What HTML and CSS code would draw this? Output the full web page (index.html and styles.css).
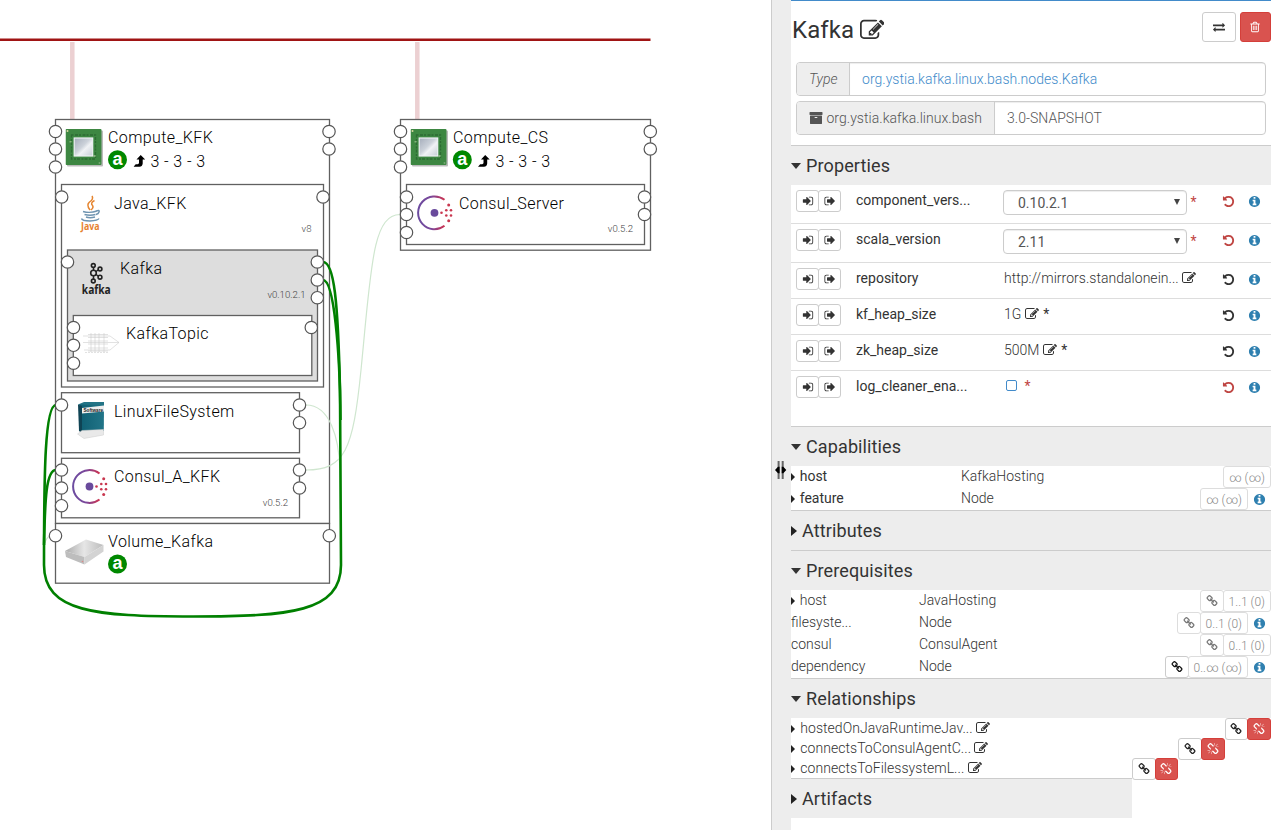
FILE: index.html
```html
<!DOCTYPE html>
<html lang="en">
<head>
<meta charset="utf-8">
<title>Topology editor</title>
<link rel="stylesheet" href="styles.css">
</head>
<body>
<svg class="sprite" width="0" height="0">
  <symbol id="edit" viewBox="0 0 1792 1792"><path d="M888 1184l116-116-152-152-116 116v56h96v96h56zm440-720q-16-16-33 1l-350 350q-17 17-1 33t33-1l350-350q17-17 1-33zm80 594v190q0 119-84.5 203.5t-203.5 84.5h-832q-119 0-203.5-84.5t-84.5-203.5v-832q0-119 84.5-203.5t203.5-84.5h832q63 0 117 25 15 7 18 23 3 17-9 29l-49 49q-14 14-32 8-23-6-45-6h-832q-66 0-113 47t-47 113v832q0 66 47 113t113 47h832q66 0 113-47t47-113v-126q0-13 9-22l64-64q15-15 35-7t20 29zm-96-738l288 288-672 672h-288v-288zm444 132l-92 92-288-288 92-92q28-28 68-28t68 28l152 152q28 28 28 68t-28 68z"/></symbol>
  <symbol id="undo" viewBox="0 0 1792 1792"><path d="M1664 896q0 156-61 298t-164 245-245 164-298 61q-172 0-327-72.5t-264-204.5q-7-10-6.5-22.5t8.5-20.5l137-138q10-9 25-9 16 2 23 12 73 95 179 147t225 52q104 0 198.5-40.5t163.5-109.5 109.5-163.5 40.5-198.5-40.5-198.5-109.5-163.5-163.5-109.5-198.5-40.5q-98 0-188 35.5t-160 101.5l137 138q31 30 14 69-17 40-59 40h-448q-26 0-45-19t-19-45v-448q0-42 40-59 39-17 69 14l130 129q107-101 244.5-156.5t284.5-55.5q156 0 298 61t245 164 164 245 61 298z"/></symbol>
  <symbol id="info" viewBox="0 0 1792 1792"><path d="M1152 1376v-160q0-14-9-23t-23-9h-96v-512q0-14-9-23t-23-9h-320q-14 0-23 9t-9 23v160q0 14 9 23t23 9h96v320h-96q-14 0-23 9t-9 23v160q0 14 9 23t23 9h448q14 0 23-9t9-23zm-128-896v-160q0-14-9-23t-23-9h-192q-14 0-23 9t-9 23v160q0 14 9 23t23 9h192q14 0 23-9t9-23zm640 416q0 209-103 385.5t-279.5 279.5-385.5 103-385.5-103-279.5-279.5-103-385.5 103-385.5 279.5-279.5 385.5-103 385.5 103 279.5 279.5 103 385.5z"/></symbol>
  <symbol id="in" viewBox="0 0 1792 1792"><path d="M1312 896q0 26-19 45l-544 544q-19 19-45 19t-45-19-19-45v-288h-448q-26 0-45-19t-19-45v-384q0-26 19-45t45-19h448v-288q0-26 19-45t45-19 45 19l544 544q19 19 19 45zm352-352v704q0 119-84.5 203.5t-203.5 84.5h-320q-13 0-22.5-9.5t-9.5-22.5q0-4-1-20t-.5-26.5 3-23.5 10-19.5 20.5-6.5h320q66 0 113-47t47-113v-704q0-66-47-113t-113-47h-312l-11.5-1-11.5-3-8-5.5-7-9-2-13.5q0-4-1-20t-.5-26.5 3-23.5 10-19.5 20.5-6.5h320q119 0 203.5 84.5t84.5 203.5z"/></symbol>
  <symbol id="out" viewBox="0 0 1792 1792"><path d="M704 1440q0 4 1 20t.5 26.5-3 23.5-10 19.5-20.5 6.5h-320q-119 0-203.5-84.5t-84.5-203.5v-704q0-119 84.5-203.5t203.5-84.5h320q13 0 22.5 9.5t9.5 22.5q0 4 1 20t.5 26.5-3 23.5-10 19.5-20.5 6.5h-320q-66 0-113 47t-47 113v704q0 66 47 113t113 47h312l11.5 1 11.5 3 8 5.5 7 9 2 13.5zm928-544q0 26-19 45l-544 544q-19 19-45 19t-45-19-19-45v-288h-448q-26 0-45-19t-19-45v-384q0-26 19-45t45-19h448v-288q0-26 19-45t45-19 45 19l544 544q19 19 19 45z"/></symbol>
  <symbol id="link" viewBox="0 0 1792 1792"><path d="M1520 1216q0-40-28-68l-208-208q-28-28-68-28-42 0-72 32 3 3 19 18.5t21.5 21.5 15 19 13 25.5 3.5 27.5q0 40-28 68t-68 28q-15 0-27.5-3.5t-25.5-13-19-15-21.5-21.5-18.5-19q-33 31-33 73 0 40 28 68l206 207q27 27 68 27 40 0 68-26l147-146q28-28 28-67zm-703-705q0-40-28-68l-206-207q-28-28-68-28-39 0-68 27l-147 146q-28 28-28 67 0 40 28 68l208 208q27 27 68 27 42 0 72-31-3-3-19-18.5t-21.5-21.5-15-19-13-25.5-3.5-27.5q0-40 28-68t68-28q15 0 27.5 3.5t25.5 13 19 15 21.5 21.5 18.5 19q33-31 33-73zm895 705q0 120-85 203l-147 146q-83 83-203 83-121 0-204-85l-206-207q-83-83-83-203 0-123 88-209l-88-88q-86 88-208 88-120 0-204-84l-208-208q-84-84-84-204t85-203l147-146q83-83 203-83 121 0 204 85l206 207q83 83 83 203 0 123-88 209l88 88q86-88 208-88 120 0 204 84l208 208q84 84 84 204z"/></symbol>
  <symbol id="unlink" viewBox="0 0 1792 1792"><path d="M503 1271l-256 256q-10 9-23 9-12 0-23-9-9-10-9-23t9-23l256-256q10-9 23-9t23 9q9 10 9 23t-9 23zm169 41v320q0 14-9 23t-23 9-23-9-9-23v-320q0-14 9-23t23-9 23 9 9 23zm-224-224q0 14-9 23t-23 9h-320q-14 0-23-9t-9-23 9-23 23-9h320q14 0 23 9t9 23zm1264 128q0 120-85 203l-147 146q-83 83-203 83-121 0-204-85l-334-335q-21-21-42-56l239-18 273 274q28 28 68 27.5t68-27.5l147-146q28-28 28-67 0-40-28-68l-274-275 18-239q35 21 56 42l336 336q84 86 84 204zm-617-724l-239 18-273-274q-28-28-68-28-39 0-68 27l-147 146q-28 28-28 67 0 40 28 68l274 274-18 240q-35-21-56-42l-336-336q-84-86-84-204 0-120 85-203l147-146q83-83 203-83 121 0 204 85l334 335q21 21 42 56zm633 84q0 14-9 23t-23 9h-320q-14 0-23-9t-9-23 9-23 23-9h320q14 0 23 9t9 23zm-544-544v320q0 14-9 23t-23 9-23-9-9-23v-320q0-14 9-23t23-9 23 9 9 23zm407 151l-256 256q-11 9-23 9t-23-9q-9-10-9-23t9-23l256-256q10-9 23-9t23 9q9 10 9 23t-9 23z"/></symbol>
  <symbol id="trash" viewBox="0 0 1792 1792"><path d="M704 736v576q0 14-9 23t-23 9h-64q-14 0-23-9t-9-23v-576q0-14 9-23t23-9h64q14 0 23 9t9 23zm256 0v576q0 14-9 23t-23 9h-64q-14 0-23-9t-9-23v-576q0-14 9-23t23-9h64q14 0 23 9t9 23zm256 0v576q0 14-9 23t-23 9h-64q-14 0-23-9t-9-23v-576q0-14 9-23t23-9h64q14 0 23 9t9 23zm128 724v-948h-896v948q0 22 7 40.5t14.5 27 10.5 8.5h832q3 0 10.5-8.5t14.5-27 7-40.5zm-672-1076h448l-48-117q-7-9-17-11h-317q-10 2-17 11zm928 32v64q0 14-9 23t-23 9h-96v948q0 83-47 143.5t-113 60.5h-832q-66 0-113-58.5t-47-141.5v-952h-96q-14 0-23-9t-9-23v-64q0-14 9-23t23-9h309l70-167q15-37 54-63t79-26h320q40 0 79 26t54 63l70 167h309q14 0 23 9t9 23z"/></symbol>
  <symbol id="exchange" viewBox="0 0 1792 1792"><path d="M1792 1184v192q0 13-9.500 22.500t-22.500 9.500h-1376v192q0 13-9.500 22.500t-22.500 9.500q-12 0-24-10l-319-320q-9-9-9-22 0-14 9-23l320-320q9-9 23-9 13 0 22.500 9.500t9.500 22.500v192h1376q13 0 22.500 9.500t9.500 22.500zm0-544q0 14-9 23l-320 320q-9 9-23 9-13 0-22.500-9.500t-9.500-22.500v-192h-1376q-13 0-22.500-9.500t-9.500-22.500v-192q0-13 9.500-22.500t22.500-9.500h1376v-192q0-14 9-23t23-9q12 0 24 10l319 319q9 9 9 23z"/></symbol>
  <symbol id="archive" viewBox="0 0 1792 1792"><path d="M1088 832q0-26-19-45t-45-19h-256q-26 0-45 19t-19 45 19 45 45 19h256q26 0 45-19t19-45zm576-192v960q0 26-19 45t-45 19h-1408q-26 0-45-19t-19-45v-960q0-26 19-45t45-19h1408q26 0 45 19t19 45zm64-448v256q0 26-19 45t-45 19h-1536q-26 0-45-19t-19-45v-256q0-26 19-45t45-19h1536q26 0 45 19t19 45z"/></symbol>
  <symbol id="resize" viewBox="0 0 12 20"><path fill="#666" d="M2.600 1h2v18h-2zM6.700 1h2v18h-2z"/><path fill="#000" d="M0 10L3 6.800h1.600v6.400H3ZM11.300 10L8.300 6.800H6.700v6.400H8.300Z"/></symbol>
  <symbol id="chip" viewBox="0 0 38 38"><rect x="1.500" y="1.500" width="36" height="36" rx="1" fill="#bbb"/><rect x="0" y="0" width="36" height="36" rx="1" fill="#3d8742"/><rect x="6" y="6" width="24" height="24" fill="none" stroke="#2d6c33" stroke-width="1.300" stroke-dasharray="2 1.500 3 1"/><rect x="4" y="12" width="2" height="1.500" fill="#86b07e"/><rect x="28" y="26" width="2" height="2" fill="#86b07e"/><circle cx="2" cy="2" r="1" fill="#d8d8a0"/><circle cx="34" cy="34" r="1" fill="#74a670"/><rect x="8.700" y="9" width="18.500" height="18" fill="url(#metal)" stroke="#eef1f4" stroke-width="1.200"/></symbol>
  <symbol id="consul" viewBox="0 0 36 36"><path d="M27.500 5A16.400 16.400 0 1 0 27.500 31" fill="none" stroke="url(#consulGrad)" stroke-width="2"/><circle cx="17.500" cy="18" r="3.900"/><g fill="#c9374f"><circle cx="24.500" cy="18" r="1.300"/><circle cx="29.300" cy="15.500" r="1.300"/><circle cx="29.300" cy="20.700" r="1.300"/><circle cx="34" cy="15.500" r="1.300"/><circle cx="34" cy="20.700" r="1.300"/><circle cx="31.700" cy="10.200" r="1.500"/><circle cx="31.700" cy="26" r="1.500"/></g></symbol>
  <symbol id="scale" viewBox="0 0 12 12"><path d="M7.200 0L11.700 4.500H9.200V8.500Q8.700 11.700 6 11.700H0L2.200 9.300H4.200Q5.300 9 5.500 8V4.500H3Z"/></symbol>
  <linearGradient id="metal" x1="0" y1="0" x2="1" y2="1"><stop offset="0" stop-color="#a4acba"/><stop offset=".45" stop-color="#ccd2da"/><stop offset=".6" stop-color="#f0f2f5"/><stop offset="1" stop-color="#c6cdd6"/></linearGradient>
  <linearGradient id="consulGrad"><stop offset="0" stop-color="#6c4ca0"/><stop offset=".5" stop-color="#7b479a"/><stop offset="1" stop-color="#cd3350"/></linearGradient>
  <linearGradient id="disk"><stop offset="0" stop-color="#aaa"/><stop offset=".5" stop-color="#e6e6e6"/><stop offset="1" stop-color="#bbb"/></linearGradient>
  <linearGradient id="box"><stop offset="0" stop-color="#0f5f73"/><stop offset="1" stop-color="#227588"/></linearGradient>
</svg>

<div class="editor">
  <svg class="topology" viewBox="0 0 771 830" width="771" height="830">
    <path class="network" d="M0 39.700H650.500"/>
    <path class="drop" d="M72.300 42V119M417.300 42V119"/>

    <g class="node">
      <rect x="55.500" y="119.500" width="274" height="404"/>
      <rect x="61.500" y="184.500" width="262" height="202.500"/>
      <rect class="selected" x="67.500" y="250" width="250" height="131"/>
      <rect x="73.300" y="315.500" width="238.500" height="60"/>
      <rect x="61.500" y="392.700" width="238" height="60"/>
      <rect x="61.500" y="458.300" width="238" height="59.500"/>
      <rect x="55.500" y="523.500" width="274" height="59.700"/>
      <rect x="400.500" y="119.500" width="250" height="130.700"/>
      <rect x="406.500" y="184.500" width="238" height="60"/>
    </g>

    <path class="relation-thin" d="M306 405C330 405 339 438 340 470M306 470C345 470 353 450 361 370C371 270 372 214.500 400 214.500M50 536Q46 538 45 543"/>
    <path class="relation" d="M323 262C334 262 338 300 340 390C340.500 440 341 500 341 565C341 612 290 616.500 193 616.500C95 616.500 44 612 44 565C44 470 45 405 56 405"/>
    <path class="relation" d="M323 280C334 280 340 350 340.500 420M56 470C46 470 45 500 44 545"/>

    <g class="port">
      <circle cx="55.500" cy="131.500" r="6.200"/><circle cx="55.500" cy="149" r="6.200"/><circle cx="55.500" cy="167" r="6.200"/>
      <circle cx="329" cy="131.500" r="6.200"/><circle cx="329" cy="149" r="6.200"/>
      <circle cx="61.700" cy="197" r="6.200"/><circle cx="323" cy="197" r="6.200"/>
      <circle cx="67.500" cy="262" r="6.200"/><circle cx="317.300" cy="262" r="6.200"/><circle cx="317.300" cy="280" r="6.200"/><circle cx="317.300" cy="297.700" r="6.200"/>
      <circle cx="73.500" cy="327.500" r="6.200"/><circle cx="73.500" cy="345.300" r="6.200"/><circle cx="73.500" cy="363.200" r="6.200"/><circle cx="311.300" cy="327.500" r="6.200"/>
      <circle cx="61.500" cy="405" r="6.200"/><circle cx="299.500" cy="405" r="6.200"/><circle cx="299.500" cy="422.700" r="6.200"/>
      <circle cx="61.500" cy="470" r="6.200"/><circle cx="61.500" cy="488" r="6.200"/><circle cx="61.500" cy="505.700" r="6.200"/>
      <circle cx="299.500" cy="470" r="6.200"/><circle cx="299.500" cy="488" r="6.200"/>
      <circle cx="55.500" cy="535.700" r="6.200"/><circle cx="329.300" cy="535.700" r="6.200"/>
      <circle cx="400.500" cy="131.500" r="6.200"/><circle cx="400.500" cy="149" r="6.200"/><circle cx="400.500" cy="167" r="6.200"/>
      <circle cx="650.300" cy="131.500" r="6.200"/><circle cx="650.300" cy="149" r="6.200"/>
      <circle cx="406.500" cy="197" r="6.200"/><circle cx="406.500" cy="214.500" r="6.200"/><circle cx="406.500" cy="232.500" r="6.200"/>
      <circle cx="644.500" cy="197" r="6.200"/><circle cx="644.500" cy="214.500" r="6.200"/>
    </g>

    <use href="#chip" x="65.500" y="129" width="38" height="38"/>
    <use href="#chip" x="410.500" y="129" width="38" height="38"/>
    <g class="consul">
      <use href="#consul" x="72" y="468.500" width="36" height="36"/>
      <use href="#consul" x="417" y="194.800" width="36" height="36"/>
    </g>

    <g class="java">
      <path d="M92 196Q94 199 89.500 202Q86 205 90 210M94.500 200.500Q90 203 92.500 205.500Q94 207.500 91 210" stroke="#e58530" stroke-width="1.500"/>
      <path d="M83 211.500Q90 213.500 97 211M84.500 214.500Q90 216 95.500 214.500M86 217Q90 218.500 95 217M81.500 218.500Q82 221 90 221Q98 220.500 99 218.500M96 211Q100 209.500 99 212Q98.500 214 96 214.500" stroke="#6f94b0" stroke-width="1.400"/>
      <text x="81" y="230" textLength="18.500" lengthAdjust="spacingAndGlyphs">Java</text>
    </g>

    <g class="kafka">
      <path d="M93.500 266V280M94 273L99.500 269M94 273L99.500 277"/>
      <circle cx="93.300" cy="265.500" r="1.900"/><circle cx="93.500" cy="273" r="2.800"/><circle cx="93.300" cy="281" r="1.900"/><circle cx="100" cy="269" r="1.900"/><circle cx="100" cy="277.200" r="1.900"/>
      <text x="81.800" y="293.700" textLength="29" lengthAdjust="spacingAndGlyphs">kafka</text>
    </g>

    <g class="topic">
      <path d="M83 336H110L119 342.500L110 350H84M83 342.500H119M88 334.500H108M88 337.500H108M88 341H108M88 344H108M88 348H108M88 351H108"/>
      <path d="M85 352.500H108" stroke-dasharray="2 1"/>
      <path d="M91 333V352M95 333V352M99 333V352M104 333V352"/>
    </g>

    <g>
      <path d="M78 404.500L84 402H104V405L83 407Z" fill="#237486"/>
      <path d="M80 404.500L104 405L103.800 431L80 433Z" fill="url(#box)"/>
      <path d="M78 404.500L82 406V433L79 431Z" fill="#0f4354"/>
      <path d="M82 408L104 405.500V411.500L82 413.500Z" fill="#eee"/>
      <path d="M77.500 434L82 430.500L103.500 429.500V435L84 438.500Z" fill="#e9e9e9" stroke="#ccc" stroke-width=".5"/>
      <text class="software" x="83.500" y="412" textLength="19.500" lengthAdjust="spacingAndGlyphs">Software</text>
    </g>

    <g>
      <path d="M65 551L86 539.500L103.500 545L84.500 557Z" fill="url(#disk)"/>
      <path d="M65 551L84.500 557V564.500L66 557Z" fill="#bdbdbd"/>
      <path d="M84.500 557L103.500 545V551.500L84.500 564.500Z" fill="#d3d3d3"/>
      <circle cx="82.500" cy="561.500" r=".8" fill="#d88"/>
    </g>

    <g class="scalable">
      <circle cx="117.500" cy="159.700" r="9.500"/><circle cx="462.300" cy="159.700" r="9.500"/><circle cx="117.500" cy="564" r="9.500"/>
      <text x="117.500" y="165">a</text><text x="462.300" y="165">a</text><text x="117.500" y="569.300">a</text>
    </g>
    <g class="arrow">
      <use href="#scale" x="133.500" y="155" width="12" height="12"/>
      <use href="#scale" x="478" y="155" width="12" height="12"/>
    </g>

    <g class="label">
      <text x="108" y="143">Compute_KFK</text><text x="150.500" y="166.500">3 - 3 - 3</text>
      <text x="114" y="208.500">Java_KFK</text>
      <text x="120" y="274">Kafka</text>
      <text x="126" y="339">KafkaTopic</text>
      <text x="114" y="417">LinuxFileSystem</text>
      <text x="114" y="482">Consul_A_KFK</text>
      <text x="108" y="547">Volume_Kafka</text>
      <text x="453" y="143">Compute_CS</text><text x="495.500" y="166.500">3 - 3 - 3</text>
      <text x="459" y="209">Consul_Server</text>
    </g>
    <g class="version">
      <text x="311.500" y="232">v8</text><text x="305.500" y="298">v0.10.2.1</text><text x="288" y="506">v0.5.2</text><text x="633" y="232">v0.5.2</text>
    </g>
  </svg>

  <div class="splitter"><svg class="grip"><use href="#resize"/></svg></div>

  <aside class="panel">
    <header class="head">
      <div class="titlebar">
        <h1>Kafka <svg class="edit-lg"><use href="#edit"/></svg></h1>
        <span class="btn swap"><svg class="ic"><use href="#exchange"/></svg></span>
        <span class="btn danger remove"><svg class="ic"><use href="#trash"/></svg></span>
      </div>
      <div class="group"><span class="addon kind"><em>Type</em></span><a class="field type">org.ystia.kafka.linux.bash.nodes.Kafka</a></div>
      <div class="group"><span class="addon archive"><svg class="ic14"><use href="#archive"/></svg> org.ystia.kafka.linux.bash</span><span class="field">3.0-SNAPSHOT</span></div>
    </header>

    <h2 class="open">Properties</h2>
    <div class="props">
      <div class="prop tall"><span class="pair"><i><svg><use href="#in"/></svg></i><i><svg><use href="#out"/></svg></i></span><b>component_vers...</b><span class="value"><span class="select">0.10.2.1</span><u class="red">*</u></span><svg class="undo red"><use href="#undo"/></svg><svg class="info"><use href="#info"/></svg></div>
      <div class="prop tall"><span class="pair"><i><svg><use href="#in"/></svg></i><i><svg><use href="#out"/></svg></i></span><b>scala_version</b><span class="value"><span class="select">2.11</span><u class="red">*</u></span><svg class="undo red"><use href="#undo"/></svg><svg class="info"><use href="#info"/></svg></div>
      <div class="prop"><span class="pair"><i><svg><use href="#in"/></svg></i><i><svg><use href="#out"/></svg></i></span><b>repository</b><span class="value long">http://mirrors.standalonein... <svg class="edit"><use href="#edit"/></svg></span><svg class="undo"><use href="#undo"/></svg><svg class="info"><use href="#info"/></svg></div>
      <div class="prop"><span class="pair"><i><svg><use href="#in"/></svg></i><i><svg><use href="#out"/></svg></i></span><b>kf_heap_size</b><span class="value">1G <svg class="edit"><use href="#edit"/></svg><u>*</u></span><svg class="undo"><use href="#undo"/></svg><svg class="info"><use href="#info"/></svg></div>
      <div class="prop"><span class="pair"><i><svg><use href="#in"/></svg></i><i><svg><use href="#out"/></svg></i></span><b>zk_heap_size</b><span class="value">500M <svg class="edit"><use href="#edit"/></svg><u>*</u></span><svg class="undo"><use href="#undo"/></svg><svg class="info"><use href="#info"/></svg></div>
      <div class="prop"><span class="pair"><i><svg><use href="#in"/></svg></i><i><svg><use href="#out"/></svg></i></span><b>log_cleaner_ena...</b><span class="value"><span class="check"></span><u class="red">*</u></span><svg class="undo red"><use href="#undo"/></svg><svg class="info"><use href="#info"/></svg></div>
    </div>

    <h2 class="open line">Capabilities</h2>
    <div class="list caps">
      <div class="item"><b class="tri">host</b><span>KafkaHosting</span><span class="tools"><span class="tag">∞ (∞)</span></span></div>
      <div class="item"><b class="tri">feature</b><span>Node</span><span class="tools"><span class="tag">∞ (∞)</span><svg class="info"><use href="#info"/></svg></span></div>
    </div>

    <h2 class="closed line">Attributes</h2>

    <h2 class="open line">Prerequisites</h2>
    <div class="list reqs">
      <div class="item"><span class="tri">host</span><span>JavaHosting</span><span class="tools"><span class="tag chain"><svg><use href="#link"/></svg></span><span class="tag">1..1 (0)</span></span></div>
      <div class="item"><span>filesyste...</span><span>Node</span><span class="tools"><span class="tag chain"><svg><use href="#link"/></svg></span><span class="tag">0..1 (0)</span><svg class="info"><use href="#info"/></svg></span></div>
      <div class="item"><span>consul</span><span>ConsulAgent</span><span class="tools"><span class="tag chain"><svg><use href="#link"/></svg></span><span class="tag">0..1 (0)</span></span></div>
      <div class="item"><span>dependency</span><span>Node</span><span class="tools"><span class="tag chain active"><svg><use href="#link"/></svg></span><span class="tag">0..∞ (∞)</span><svg class="info"><use href="#info"/></svg></span></div>
    </div>

    <h2 class="open line">Relationships</h2>
    <div class="rels">
      <div class="rel"><span class="relbtns"><i><svg><use href="#link"/></svg></i><i class="danger"><svg><use href="#unlink"/></svg></i></span><span class="tri">hostedOnJavaRuntimeJav...</span> <svg class="edit"><use href="#edit"/></svg></div>
      <div class="rel"><span class="relbtns"><i><svg><use href="#link"/></svg></i><i class="danger"><svg><use href="#unlink"/></svg></i></span><span class="tri">connectsToConsulAgentC...</span> <svg class="edit"><use href="#edit"/></svg></div>
      <div class="rel"><span class="relbtns"><i><svg><use href="#link"/></svg></i><i class="danger"><svg><use href="#unlink"/></svg></i></span><span class="tri">connectsToFilessystemL...</span> <svg class="edit"><use href="#edit"/></svg></div>
    </div>
    <h2 class="closed line">Artifacts</h2>
  </aside>
</div>
</body>
</html>
```
FILE: styles.css
```css
* { box-sizing: border-box; }
html, body { margin: 0; height: 830px; overflow: hidden; }
body { font: 300 14px/20px Roboto, sans-serif; color: #333; background: #fff; }
svg { fill: currentColor; }
b { font-weight: 400; }
.sprite { position: absolute; }
.editor { display: flex; height: 830px; }

.topology { flex: none; display: block; }
.network { stroke: #a01414; stroke-width: 2.600; }
.drop { stroke: #ecd0d2; stroke-width: 4.500; }
.node rect { fill: #fff; stroke: #606060; stroke-width: 1.300; }
.node .selected { fill: #ddd; }
.port circle { fill: #fff; stroke: #555; stroke-width: 1.200; }
.relation { fill: none; stroke: #008000; stroke-width: 2.600; }
.relation-thin { fill: none; stroke: #cfe6cf; stroke-width: 1.200; }
.label text { font-size: 16px; letter-spacing: .4px; fill: #000; }
.version text { font-size: 9.600px; fill: #444; text-anchor: end; }
.consul { fill: #694a9c; }
.arrow { fill: #000; }
.java path { fill: none; }
.java text { font: 700 11px "Open Sans", sans-serif; fill: #e6812f; }
.kafka path { stroke: #222; stroke-width: 1.500; }
.kafka circle { fill: #ddd; stroke: #222; stroke-width: 1.600; }
.kafka text { font: 700 11.500px "Open Sans", sans-serif; fill: #222; }
.topic path { fill: none; stroke: #cfcfcf; stroke-width: .6; }
.software { font: 700 5px "Liberation Sans", sans-serif; fill: #222; }
.scalable circle { fill: #008800; }
.scalable text { font: 700 18px "Liberation Sans", sans-serif; fill: #fff; text-anchor: middle; }

.splitter { width: 20px; flex: none; background: #ededed; border-left: 1px solid #ccc; padding: 460px 0 0 3px; }
.grip { display: block; width: 12px; height: 20px; }

.panel { width: 480px; flex: none; border-top: 1px solid #428bca; }
.head { height: 145px; border-bottom: 1px solid #ccc; padding: 11px 0 0; }
.titlebar { display: flex; height: 50px; align-items: flex-start; }
h1 { flex: 1; margin: 0; padding: 0 0 0 1px; font-size: 24px; line-height: 36px; font-weight: 400; letter-spacing: .1px; }
.edit-lg { width: 24.500px; height: 24.500px; vertical-align: -4px; margin-left: -.5px; }
.btn { display: flex; align-items: center; justify-content: center; height: 30px; border: 1px solid #ccc; border-radius: 3px; }
.swap { width: 34px; margin-right: 4px; }
.remove { width: 31px; }
.danger { background: #d9534f; border-color: #d43f3a; color: #fff; }
.ic { width: 12px; height: 12px; }
.remove .ic { margin-right: 1px; }
.ic14 { width: 14px; height: 14px; vertical-align: -2px; }
.group { display: flex; height: 34px; margin: 0 5px 5px; border: 1px solid #ccc; border-radius: 4px; line-height: 32px; color: #555; overflow: hidden; }
.addon { background: #eee; border-right: 1px solid #ccc; padding: 0 0 0 12px; flex: none; }
.kind { width: 53px; }
.archive { width: 198px; letter-spacing: .04px; }
.field { padding: 0 12px; flex: 1; box-shadow: inset 0 1px 1px rgba(0,0,0,.075); letter-spacing: .03px; }
.type { color: #428bca; }

h2 { display: flex; align-items: center; height: 39px; margin: 0; background: #ededed; font-size: 18px; line-height: 39px; font-weight: 400; letter-spacing: .12px; overflow: hidden; }
h2.line { height: 40px; border-top: 1px solid #ccc; }
h2::before { content: ""; width: 0; height: 0; }
.open::before { border: 5px solid transparent; border-top: 6px solid #333; border-bottom: 0; margin-right: 5px; }
.closed::before { border: 5.500px solid transparent; border-left: 6px solid #222; border-right: 0; margin: 0 5px 0 0; }

.props { height: 241px; }
.prop { display: grid; grid-template-columns: 60px 147px 219px 26px 22px; height: 36px; padding: 5px 0 0 5px; border-bottom: 1px solid #ddd; }
.prop:last-child { border: 0; }
.prop.tall { height: 39px; }
.pair { display: flex; }
.pair i { display: flex; align-items: center; justify-content: center; width: 23px; height: 22px; border: 1px solid #ccc; border-radius: 3px; }
.pair i + i { margin-left: -1px; }
.pair svg { width: 12px; height: 12px; }
.value { display: flex; align-items: flex-start; padding-left: 1px; white-space: pre; }
.long { letter-spacing: .03px; }
u { text-decoration: none; font-weight: 400; margin-left: 4.500px; }
.select { display: flex; justify-content: space-between; width: 184px; height: 25px; border: 1px solid #ccc; border-radius: 4px; padding: 0 6px 0 14px; line-height: 25px; color: #555; font-weight: 400; margin-left: -1px; box-shadow: inset 0 1px 1px rgba(0,0,0,.075); }
.select::after { content: ""; border: 3px solid transparent; border-top: 6px solid #444; border-bottom: 0; margin-top: 8px; height: 0; }
.select + u { margin: 2px 0 0 3.500px; }
.edit { width: 14px; height: 14px; vertical-align: -2px; }
.value .edit { margin-top: 3px; }
.undo, .info { width: 13px; height: 13px; margin-top: 5px; }
.red { color: #bf4542; }
.info { color: #2f80b0; }
.check { width: 11px; height: 11px; border: 1px solid #428bca; border-radius: 2px; margin: 4px 3px 0 2px; }

.item { display: grid; height: 22px; line-height: 20px; }
.caps .item { grid-template-columns: 170px 1fr auto; }
.reqs .item { grid-template-columns: 128px 1fr auto; }
.tri::before { content: ""; display: inline-block; border: 4.500px solid transparent; border-left: 4.500px solid #222; border-right: 0; margin: 0 4.700px 0 0; }
.tools { display: flex; }
.tools .info { margin: 5px 5px 0 5px; }
.tag { display: flex; align-items: center; height: 22px; border: 1px solid #ddd; border-radius: 3px; padding: 1px 5px 0; font-size: 12px; color: #888; }
.tag + .tag { margin-left: -1px; }
.chain { width: 23.500px; padding: 0; justify-content: center; color: #777; }
.tag svg { width: 12px; height: 12px; }
.tag.active { color: #111; border-color: #ccc; }

.rels { height: 60px; }
.rel { height: 20px; letter-spacing: .04px; }
.rel .tri::before { margin-right: 5.300px; }
.relbtns { float: right; display: flex; }
.relbtns i { display: flex; align-items: center; justify-content: center; width: 23.700px; height: 22px; border: 1px solid #ccc; border-radius: 3px; background: #fff; color: #222; }
.relbtns i + i { margin-left: -1px; }
.relbtns .danger { background: #d9534f; border-color: #d43f3a; color: #fff; }
.relbtns svg { width: 12px; height: 12px; }
```
